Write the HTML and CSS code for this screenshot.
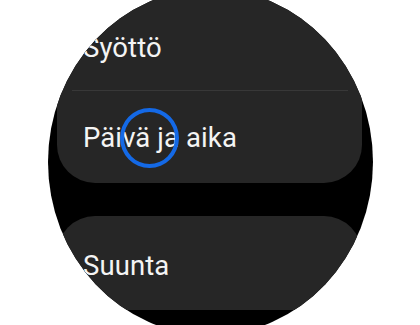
FILE: index.html
```html
<!DOCTYPE html>
<html lang="fi">
<head>
<meta charset="utf-8">
<title>Asetukset</title>
<link rel="stylesheet" href="styles.css">
</head>
<body>
<div class="watch">
  <div class="card card-top">
    <div class="row row-first">Syöttö</div>
    <div class="divider"></div>
    <div class="row">Päivä ja aika</div>
  </div>
  <div class="card card-bottom">
    <div class="row row-single">Suunta</div>
  </div>
</div>
<div class="touch"></div>
</body>
</html>
```

FILE: styles.css
```css
html, body {
  margin: 0;
  padding: 0;
}
body {
  width: 420px;
  height: 325px;
  overflow: hidden;
  background: #ffffff;
  position: relative;
  font-family: Roboto, "Liberation Sans", Arial, sans-serif;
}
.watch {
  width: 325px;
  height: 346px;
  margin: -11px 0 0 48px;
  border-radius: 50%;
  overflow: hidden;
  background: #000000;
  display: flex;
  flex-direction: column;
  gap: 33px;
}
.card {
  margin: 0 11px 0 9px;
  background: #262626;
  border-radius: 38px;
  display: flex;
  flex-direction: column;
}
.card-top {
  border-radius: 0 0 38px 38px;
}
.row {
  height: 92px;
  display: flex;
  align-items: center;
  padding-left: 26px;
  color: #f4f4f4;
  font-size: 27.5px;
  letter-spacing: 0.1px;
}
.row-first {
  height: 85px;
  padding-top: 16px;
}
.row-single {
  height: 89px;
  padding-top: 5px;
}
.divider {
  height: 1px;
  margin: 0 14px 0 15px;
  background: #383838;
}
.card-bottom {
  height: 94px;
}
.touch {
  position: absolute;
  left: 120px;
  top: 108px;
  width: 51px;
  height: 52px;
  border: 4px solid #1469e6;
  border-radius: 50%;
}
```
